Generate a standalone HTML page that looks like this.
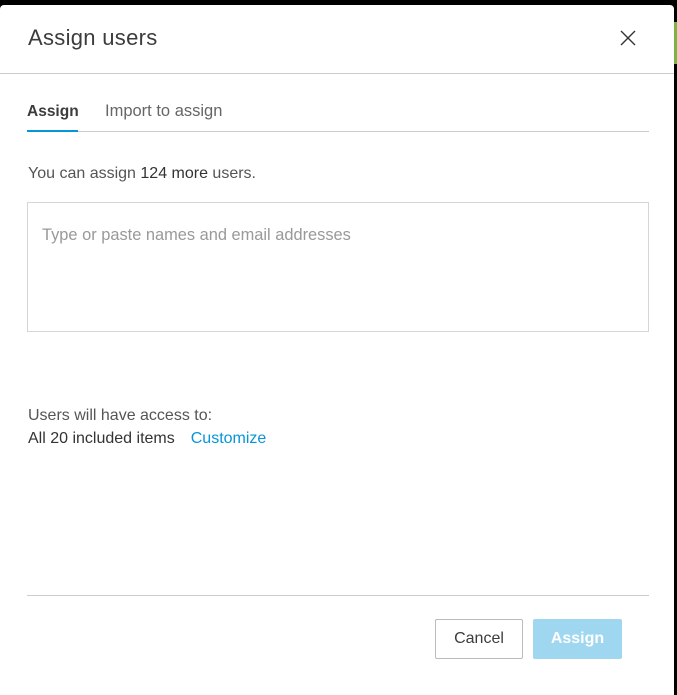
<!DOCTYPE html>
<html><head><style>
html,body{margin:0;padding:0;width:677px;height:686px;background:#000;overflow:hidden;font-family:"Liberation Sans",sans-serif;}
.g1{position:absolute;left:674px;top:22px;width:3px;height:42px;background:#7cb342}
.g2{position:absolute;left:0;top:22px;width:1px;height:42px;background:#8bc34a}
.modal{position:absolute;left:0;top:5px;width:674px;height:690px;background:#fff;border-radius:4px 4px 0 0}
.title{position:absolute;left:28px;top:20px;font-size:22px;color:#3c3c3c;letter-spacing:0.3px}
.close{position:absolute;left:620px;top:25px}
.hr{position:absolute;left:0;top:68px;width:674px;height:1px;background:#ccc}
.tab{position:absolute;top:97px;font-size:16.5px}
.tabline{position:absolute;left:27px;top:126px;width:622px;height:1px;background:#ccc}
.act{position:absolute;left:27px;top:125px;width:51px;height:2px;background:#0696d7}
.t{position:absolute;left:28px;font-size:16px;color:#555}
.ta{position:absolute;left:27px;top:197px;width:620px;height:128px;border:1px solid #d5d5d5}
.ph{position:absolute;left:14px;top:23px;font-size:16.4px;color:#999}
.div{position:absolute;left:27px;top:590px;width:622px;height:1px;background:#ccc}
.btn{position:absolute;top:614px;height:40px;box-sizing:border-box;border-radius:2px;font-size:16px;display:flex;align-items:center;justify-content:center}
</style></head><body>
<div class="g1"></div><div class="g2"></div>
<div class="modal">
<div class="title">Assign users</div>
<svg class="close" width="16" height="16" viewBox="0 0 16 16"><path d="M1 1L15 15M15 1L1 15" stroke="#333" stroke-width="1.4"/></svg>
<div class="hr"></div>
<div class="tab" style="left:27px;color:#3c3c3c;font-weight:bold;font-size:15.5px;top:98px">Assign</div>
<div class="tab" style="left:105px;color:#666">Import to assign</div>
<div class="tabline"></div><div class="act"></div>
<div class="t" style="top:160px">You can assign <span style="color:#333">124 more</span> users.</div>
<div class="ta"><div class="ph">Type or paste names and email addresses</div></div>
<div class="t" style="top:402px">Users will have access to:</div>
<div class="t" style="top:425px;color:#333">All 20 included items<span style="color:#0696d7;margin-left:16px">Customize</span></div>
<div class="div"></div>
<div class="btn" style="left:435px;width:88px;border:1px solid #bbb;color:#3c3c3c">Cancel</div>
<div class="btn" style="left:533px;width:89px;background:#9fd6f0;color:#fff;font-weight:bold">Assign</div>
</div>
</body></html>
